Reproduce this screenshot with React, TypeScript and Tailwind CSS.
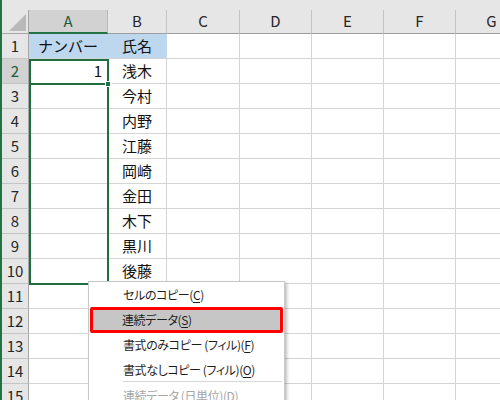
import React from 'react';

const cols = [
  { key: 'A', w: 'w-[79px]' },
  { key: 'B', w: 'w-[59px]' },
  { key: 'C', w: 'w-[73px]' },
  { key: 'D', w: 'w-[72px]' },
  { key: 'E', w: 'w-[72px]' },
  { key: 'F', w: 'w-[72px]' },
  { key: 'G', w: 'w-[72px]' },
];

const names = ['', '氏名', '浅木', '今村', '内野', '江藤', '岡崎', '金田', '木下', '黒川', '後藤'];

const rows = Array.from({ length: 15 }, (_, i) => i + 1);

const MenuItem: React.FC<{ label: string; mn: string; tail?: string; disabled?: boolean }> = ({ label, mn, tail = ')', disabled }) => (
  <div className={`h-[25px] flex items-center pl-[34px] text-[12px] tracking-[-0.4px] [font-feature-settings:'palt'] ${disabled ? 'text-[#a6a6a6]' : 'text-[#1e1e1e]'}`}>
    {label}
    <span className="underline underline-offset-2">{mn}</span>
    {tail}
  </div>
);

export default function App() {
  return (
    <div
      className="relative w-[500px] h-[400px] overflow-hidden bg-white border-l-2 border-[#217346]"
      style={{ fontFamily: '"Noto Sans CJK JP", "Noto Sans", sans-serif' }}
    >
      {/* top strip */}
      <div className="h-[10px] bg-[#e6e6e6]" />

      {/* column headers */}
      <div className="flex h-[24px]">
        <div className="w-[27px] shrink-0 bg-[#e6e6e6] border-r border-b border-[#a6a6a6] relative">
          <svg className="absolute right-[2px] bottom-[2px]" width="17" height="17" viewBox="0 0 17 17">
            <polygon points="17,0 17,17 0,17" fill="#b9b9b9" />
          </svg>
        </div>
        {cols.map((c) =>
          c.key === 'A' ? (
            <div key={c.key} className={`${c.w} shrink-0 bg-[#d2d2d2] border-r border-[#b9b9b9] border-b-2 border-b-[#217346] flex items-center justify-center text-[15px] text-[#1d5c38]`}>
              {c.key}
            </div>
          ) : (
            <div key={c.key} className={`${c.w} shrink-0 bg-[#e6e6e6] border-r border-[#c4c4c4] border-b border-b-[#9e9e9e] flex items-center justify-center text-[15px] text-[#262626]`}>
              {c.key}
            </div>
          )
        )}
      </div>

      {/* grid rows */}
      {rows.map((r) => (
        <div key={r} className="flex h-[25px]">
          <div
            className={`w-[27px] shrink-0 border-r border-r-[#a6a6a6] border-b border-b-[#c4c4c4] flex items-center justify-center text-[15px] ${
              r === 2 ? 'bg-[#d2d2d2] text-[#1d5c38]' : 'bg-[#e6e6e6] text-[#262626]'
            }`}
          >
            {r}
          </div>
          {cols.map((c) => {
            const blue = r === 1 && (c.key === 'A' || c.key === 'B');
            let text: React.ReactNode = null;
            let align = 'justify-center';
            if (r === 1 && c.key === 'A') text = 'ナンバー';
            if (c.key === 'B' && names[r]) text = names[r];
            if (r === 2 && c.key === 'A') {
              text = '1';
              align = 'justify-end pr-[5px]';
            }
            return (
              <div
                key={c.key}
                className={`${c.w} shrink-0 border-b border-[#d4d4d4] flex items-center ${align} text-[15px] text-[#111] ${
                  blue ? 'bg-[#bdd7ee] border-r border-r-[#bdd7ee]' : 'border-r'
                }`}
              >
                {text}
              </div>
            );
          })}
        </div>
      ))}

      {/* selection outline A2:A10 */}
      <div className="absolute left-[27px] top-[59px] w-[80px] h-[226px] border-2 border-[#1f6e42]" />
      <div className="absolute left-[27px] top-[83px] w-[80px] h-[2px] bg-[#1f6e42]" />
      <div className="absolute left-[103px] top-[81px] w-[6px] h-[6px] bg-[#1f6e42] border border-white" />

      {/* context menu */}
      <div className="absolute left-[86px] top-[281px] w-[197px] bg-white border border-[#c8c8c8] shadow-[2px_2px_3px_rgba(0,0,0,0.25)]">
        <MenuItem label="セルのコピー(" mn="C" />
        <div className="mx-[1px] h-[26px] -my-[0.5px] flex items-center pl-[29px] text-[12px] tracking-[-0.4px] [font-feature-settings:'palt'] text-[#1e1e1e] bg-[#c6c6c6] border-[3px] border-[#ff0000] rounded-[2px]">
          連続データ(<span className="underline underline-offset-2">S</span>)
        </div>
        <MenuItem label="書式のみコピー (フィル)(" mn="F" />
        <MenuItem label="書式なしコピー (フィル)(" mn="O" />
        <div className="ml-[34px] mr-[2px] h-px bg-[#d7d7d7] -mt-[1px] mb-[1px]" />
        <MenuItem label="連続データ (日単位)(" mn="D" disabled />
      </div>
    </div>
  );
}
